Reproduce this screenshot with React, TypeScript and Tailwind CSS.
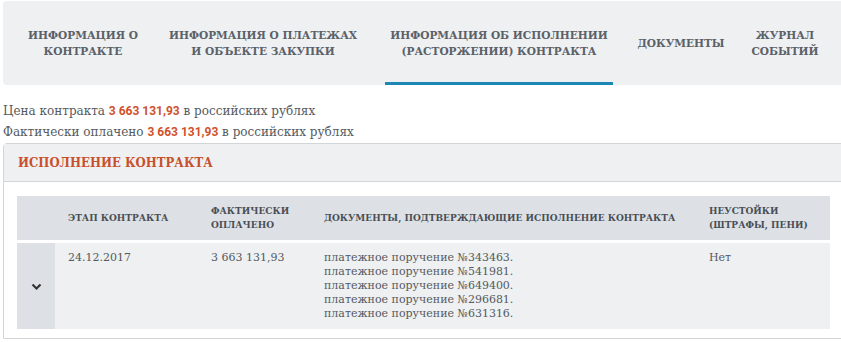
import React from 'react';

const tabs = [
  { lines: ['ИНФОРМАЦИЯ О', 'КОНТРАКТЕ'], cls: 'w-[160px]' },
  { lines: ['ИНФОРМАЦИЯ О ПЛАТЕЖАХ', 'И ОБЪЕКТЕ ЗАКУПКИ'], cls: 'w-[200px]' },
  { lines: ['ИНФОРМАЦИЯ ОБ ИСПОЛНЕНИИ', '(РАСТОРЖЕНИИ) КОНТРАКТА'], cls: 'ml-[22px] w-[228px]', active: true },
  { lines: ['ДОКУМЕНТЫ'], cls: 'w-[136px]' },
  { lines: ['ЖУРНАЛ', 'СОБЫТИЙ'], cls: 'w-[72px]' },
];

const docs = [
  'платежное поручение №343463.',
  'платежное поручение №541981.',
  'платежное поручение №649400.',
  'платежное поручение №296681.',
  'платежное поручение №631316.',
];

function Money({ children }: { children: React.ReactNode }) {
  return <span className="font-['Roboto',sans-serif] font-bold text-[#cf522d]">{children}</span>;
}

function Head({ className, children }: { className: string; children: React.ReactNode }) {
  return <div className={`${className} font-['DejaVu_Serif_Condensed',serif]`}>{children}</div>;
}

function Cell({ className, children }: { className: string; children: React.ReactNode }) {
  return <div className={`${className} font-['DejaVu_Serif',serif]`}>{children}</div>;
}

export default function App() {
  return (
    <div className="w-[841px] h-[343px] overflow-hidden bg-white">
      <div className="ml-[3px] mt-[1px] flex h-[84px] rounded-l bg-[#eef0f2]">
        {tabs.map((t, i) => (
          <div
            key={i}
            className={`${t.cls} flex shrink-0 flex-col items-center justify-center border-b-[3px] pt-[3px] text-center text-[11.75px] font-bold leading-[16px] text-[#5b6168] ${
              t.active ? 'border-[#1d88b5]' : 'border-transparent'
            }`}
          >
            {t.lines.map((l) => (
              <div key={l} className="whitespace-nowrap font-['DejaVu_Serif_Condensed',serif]">{l}</div>
            ))}
          </div>
        ))}
      </div>

      <div className="mt-[16px] ml-[3px] text-[12px] leading-[21px] text-[#555a60]">
        <div className="font-['DejaVu_Serif',serif]">
          Цена контракта <Money>3 663 131,93</Money> в российских рублях
        </div>
        <div className="font-['DejaVu_Serif',serif]">
          Фактически оплачено <Money>3 663 131,93</Money> в российских рублях
        </div>
      </div>

      <div className="ml-[3px] w-[860px] rounded-tl border border-[#d3d6d9]">
        <div className="flex h-[38px] items-center border-b border-[#d3d6d9] bg-[#eef0f2] pl-[14px] font-['DejaVu_Serif_Condensed',serif] text-[13px] font-bold text-[#c8502c]">
          ИСПОЛНЕНИЕ КОНТРАКТА
        </div>
        <div className="pl-[13px] pt-[14px] pb-[9px]">
          <div className="w-[813px] text-[#555a60]">
            <div className="flex h-[44px] items-center bg-[#dde1e6] text-[10px] font-bold leading-[14px] text-[#4a4f55]">
              <div className="w-[38px]" />
              <Head className="w-[156px] pl-[13px]">ЭТАП КОНТРАКТА</Head>
              <Head className="w-[113px]">ФАКТИЧЕСКИ<br />ОПЛАЧЕНО</Head>
              <Head className="w-[385px] whitespace-nowrap">ДОКУМЕНТЫ, ПОДТВЕРЖДАЮЩИЕ ИСПОЛНЕНИЕ КОНТРАКТА</Head>
              <Head className="">НЕУСТОЙКИ<br />(ШТРАФЫ, ПЕНИ)</Head>
            </div>
            <div className="mt-[3px] flex h-[86px] bg-[#eef0f2] text-[11px] leading-[14px]">
              <div className="flex w-[38px] items-center justify-center bg-[#dde1e6]">
                <svg width="11" height="8" viewBox="0 0 11 8" className="mt-[1px]">
                  <path d="M1.5 1.5 L5.5 5.5 L9.5 1.5" fill="none" stroke="#333" strokeWidth="2.2" />
                </svg>
              </div>
              <Cell className="w-[156px] pl-[13px] pt-[8px]">24.12.2017</Cell>
              <Cell className="w-[113px] pt-[8px]">3 663 131,93</Cell>
              <div className="w-[385px] pt-[8px]">
                {docs.map((d) => (
                  <Cell key={d} className="">{d}</Cell>
                ))}
              </div>
              <Cell className="pt-[8px]">Нет</Cell>
            </div>
          </div>
        </div>
      </div>
    </div>
  );
}
